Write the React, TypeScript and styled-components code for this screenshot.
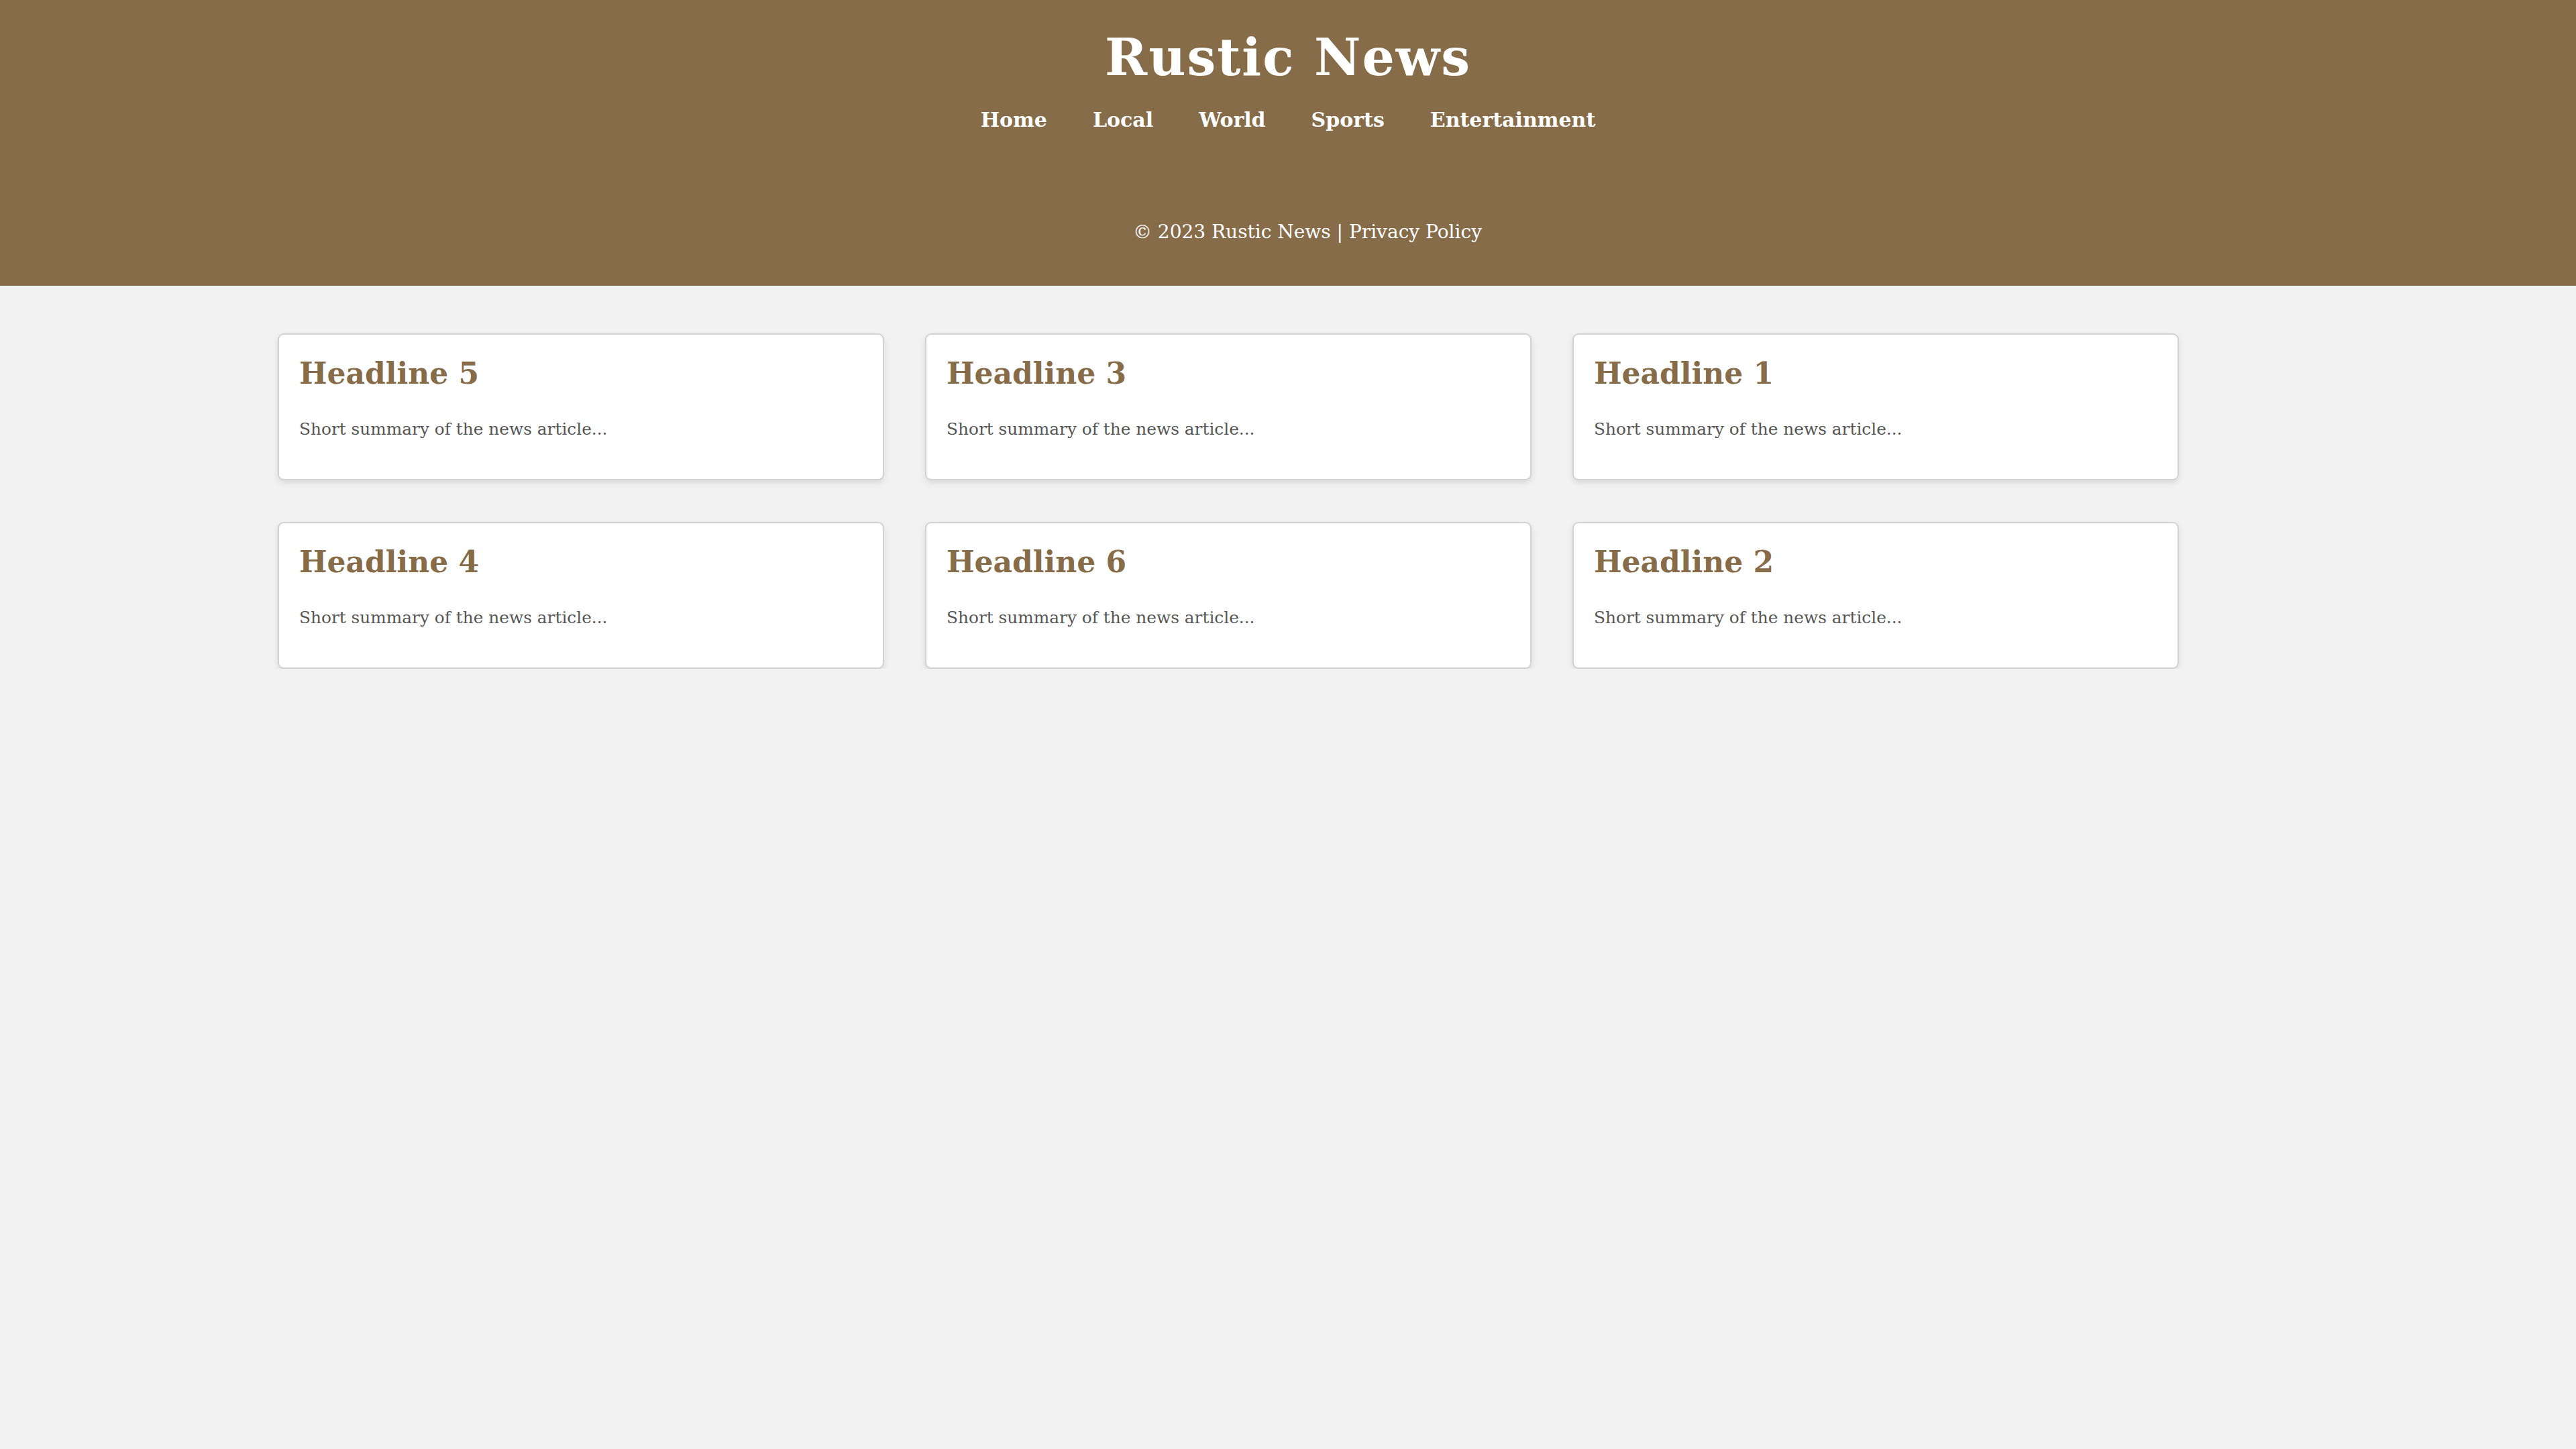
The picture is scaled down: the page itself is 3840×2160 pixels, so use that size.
import styled, { createGlobalStyle } from "styled-components";

const GlobalStyle=createGlobalStyle`
html,body{
    margin:0;
    padding:0;
}
body{
    background-color:#f2f2f2;
    font-family:"DejaVu Serif", "Liberation Serif", serif;
}
`;
const Masthead=styled.header`
background-color:#876c4a;
color:white;
text-align:center;
padding:40px 0 0;
`;
const Title=styled.h1`
margin:0 0 30px;
font-size:76px;
line-height:91px;
font-weight:700;
letter-spacing:2px;
`;
const Nav=styled.nav`
display:flex;
justify-content:center;
gap:68px;
`;
const NavLink=styled.a`
color:white;
text-decoration:none;
font-size:30px;
line-height:36px;
font-weight:700;
cursor:pointer;
`;
const SiteFooter=styled.footer`
background-color:#876c4a;
color:white;
text-align:center;
padding:131px 0 62px 58px;
font-size:28px;
line-height:36px;
`;
const Grid=styled.main`
display:grid;
grid-template-columns:repeat(3, 904px);
gap:62px 61px;
padding:71px 0 0 414px;
`;
const Card=styled.article`
background-color:white;
border:2px solid #d2d2d2;
border-radius:9px;
padding:30px;
box-shadow:0 4px 10px rgba(0,0,0,0.1);
`;
const Headline=styled.h2`
margin:0 0 40px;
color:#876c4a;
font-size:44px;
line-height:55px;
font-weight:700;
`;
const Summary=styled.p`
margin:0 0 28px;
color:#555;
font-size:24.8px;
line-height:32px;
`;

const links=['Home','Local','World','Sports','Entertainment'];
const stories=[5,3,1,4,6,2];

export default function App(){
    return <>
        <GlobalStyle/>
        <Masthead>
            <Title>Rustic News</Title>
            <Nav>
                {links.map(l=><NavLink key={l}>{l}</NavLink>)}
            </Nav>
        </Masthead>
        <SiteFooter>© 2023 Rustic News | Privacy Policy</SiteFooter>
        <Grid>
            {stories.map(n=>(
                <Card key={n}>
                    <Headline>Headline {n}</Headline>
                    <Summary>Short summary of the news article...</Summary>
                </Card>
            ))}
        </Grid>
    </>
};
